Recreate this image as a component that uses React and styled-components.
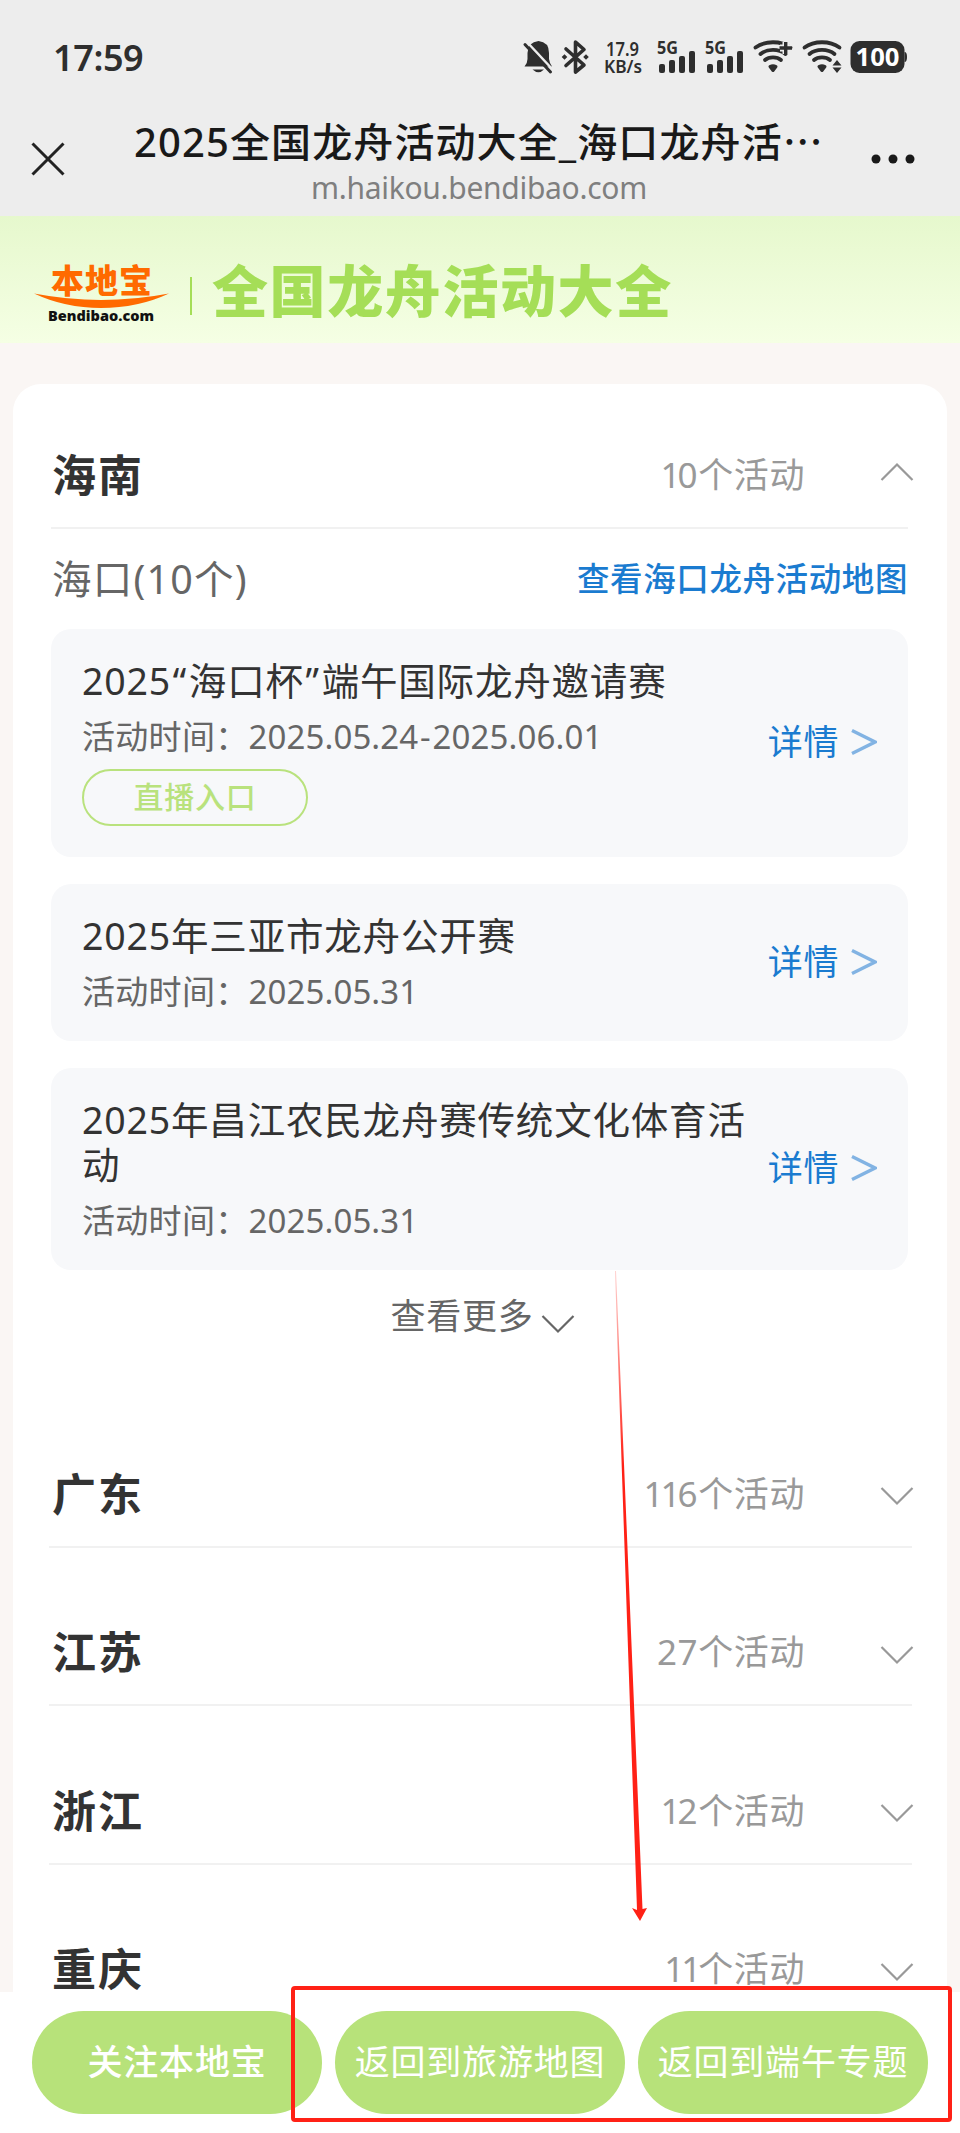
import React, { useState } from "react";
import styled, { createGlobalStyle } from "styled-components";

const provinces = [
  { name: "广东", count: 116 },
  { name: "江苏", count: 27 },
  { name: "浙江", count: 12 },
  { name: "重庆", count: 11 },
];

const events = [
  {
    title: "2025“海口杯”端午国际龙舟邀请赛",
    date: "2025.05.24-2025.06.01",
    live: true,
  },
  { title: "2025年三亚市龙舟公开赛", date: "2025.05.31" },
  { title: "2025年昌江农民龙舟赛传统文化体育活动", date: "2025.05.31" },
];

const GlobalStyle = createGlobalStyle`
  * {
    box-sizing: border-box;
  }

  body {
    margin: 0;
    background: #faf6f4;
    font-family: "Noto Sans", "Noto Sans CJK SC", sans-serif;
  }
`;

const Signal = ({ x }) => (
  <g fill="#2e2e2e">
    <text x={x - 2} y="34" fontSize="17" fontWeight="700" textLength="21" lengthAdjust="spacingAndGlyphs">
      5G
    </text>
    <rect x={x} y="44" width="6" height="9" rx="2" />
    <rect x={x + 10} y="40" width="6" height="13" rx="2" />
    <rect x={x + 20} y="36" width="6" height="17" rx="2" />
    <rect x={x + 30} y="31" width="6" height="22" rx="2" />
  </g>
);

const Wifi = ({ x }) => (
  <g transform={`translate(${x} 0)`} fill="none" stroke="#2e2e2e" strokeWidth="3.8" strokeLinecap="round">
    <path d="M-17.5 27.5 C-8 20.5 8 20.5 17.5 27.5" />
    <path d="M-12.5 34 C-6 28.5 6 28.5 12.5 34" />
    <path d="M-8 40 C-4 36.5 4 36.5 8 40" />
    <path d="M-3 46.5 Q0 45 3 46.5 L0 50.5Z" fill="#2e2e2e" strokeWidth="3" strokeLinejoin="round" />
  </g>
);

const StatusIcons = () => (
  <svg width="386" height="66" viewBox="0 0 386 66">
    {/* muted bell */}
    <path d="M3.5 46.5 Q6.5 43 6.5 39 V33 Q7 22 17.5 21 Q28 22 28 33 V39 Q28.5 43 31 46.5 Z" fill="#2e2e2e" />
    <path d="M11.5 49.5 H23 Q17.5 55 11.5 49.5Z" fill="#2e2e2e" />
    <path d="M6 22 L33 51" stroke="#ededed" strokeWidth="2.5" />
    <path d="M4 24.5 L29.5 52" stroke="#2e2e2e" strokeWidth="3" strokeLinecap="round" />
    {/* bluetooth */}
    <path
      d="M45 29 L63 45 L54.5 52 V22 L63 29.5 L45 45.5"
      fill="none"
      stroke="#2e2e2e"
      strokeWidth="3.6"
      strokeLinejoin="round"
      strokeLinecap="round"
    />
    <path d="M43.5 34.2 l2.8 2.8 l-2.8 2.8 l-2.8 -2.8Z M65 34.2 l2.8 2.8 l-2.8 2.8 l-2.8 -2.8Z" fill="#2e2e2e" />
    <g fill="#2e2e2e" fontWeight="600">
      <text x="85" y="35.5" fontSize="20" textLength="33" lengthAdjust="spacingAndGlyphs">
        17.9
      </text>
      <text x="83" y="53" fontSize="17.5" textLength="38" lengthAdjust="spacingAndGlyphs">
        KB/s
      </text>
    </g>
    <Signal x={138} />
    <Signal x={186} />
    <Wifi x={252} />
    <path d="M259 28 H271 M265 22 V34" stroke="#ededed" strokeWidth="7" />
    <path d="M258.5 28 H271 M264.7 22 V34" stroke="#2e2e2e" strokeWidth="3.4" />
    <Wifi x={301} />
    <path d="M316 40 L320.5 45.5 H311.5Z M311.5 47.5 H320.5 L316 53Z" fill="#2e2e2e" />
    <rect x="329.5" y="21" width="54" height="32" rx="9" fill="#2e2e2e" />
    <path d="M383.5 32 Q386 32 386 37 Q386 42 383.5 42Z" fill="#2e2e2e" />
    <text x="334.5" y="46" fontSize="25" fontWeight="700" fill="#fff" textLength="44" lengthAdjust="spacingAndGlyphs">
      100
    </text>
  </svg>
);

const Logo = () => (
  <svg width="136" height="76" viewBox="0 0 136 76">
    <text
      x="17"
      y="41.5"
      fontFamily="Noto Sans CJK SC, sans-serif"
      fontSize="33"
      fontWeight="900"
      fill="#ff6a00"
      textLength="101"
    >
      本地宝
    </text>
    <path d="M0 42.5 Q34 49 67 49 Q101 49 135 42.5 Q104 57 67 57 Q31 57 0 42.5Z" fill="#ff6a00" />
    <text x="14" y="70" fontSize="14.5" fontWeight="900" fill="#111" textLength="106" lengthAdjust="spacingAndGlyphs">
      Bendibao.com
    </text>
  </svg>
);

const Chevron = ({ up, color = "#999" }) => (
  <svg width="34" height="20" viewBox="0 0 34 20">
    <path d={up ? "M1.5 18 L17 2.5 L32.5 18" : "M1.5 2 L17 17.5 L32.5 2"} fill="none" stroke={color} strokeWidth="2.2" />
  </svg>
);

// the figure 1 sits tighter than the others, dashes and quotes looser
const Spaced = ({ children }) =>
  String(children)
    .split("")
    .map((char, i) => {
      if (char === "1") return <One key={i}>1</One>;
      if ("-“”".includes(char)) return <Loose key={i}>{char}</Loose>;
      return char;
    });

const Province = ({ name, count, open, onClick }) => (
  <ProvinceRow $open={open} onClick={onClick}>
    <ProvinceName>{name}</ProvinceName>
    <Count>
      <Spaced>{count}</Spaced>个活动
    </Count>
    <Chevron up={open} />
  </ProvinceRow>
);

const EventCard = ({ title, date, live }) => (
  <Card>
    <CardBody>
      <CardTitle>
        <Spaced>{title}</Spaced>
      </CardTitle>
      <CardDate>
        活动时间：
        <DateText>
          <Spaced>{date}</Spaced>
        </DateText>
      </CardDate>
      {live && <LiveButton>直播入口</LiveButton>}
    </CardBody>
    <Detail>
      详情
      <svg width="26" height="28" viewBox="0 0 26 28">
        <path d="M1 2.5 L24 14 L1 25.5" fill="none" stroke="#82b3e3" strokeWidth="3.4" />
      </svg>
    </Detail>
  </Card>
);

const App = () => {
  const [open, setOpen] = useState(true);

  return (
    <Page>
      <GlobalStyle />
      <StatusBar>
        <Clock>17:59</Clock>
        <StatusIcons />
      </StatusBar>

      <NavBar>
        <svg width="34" height="34" viewBox="0 0 34 34">
          <path d="M1.5 1.5 L32.5 32.5 M32.5 1.5 L1.5 32.5" stroke="#222" strokeWidth="3" />
        </svg>
        <NavText>
          <NavTitle>2025全国龙舟活动大全_海口龙舟活<Dots>⋯</Dots></NavTitle>
          <NavUrl>m.haikou.bendibao.com</NavUrl>
        </NavText>
        <svg width="44" height="10" viewBox="0 0 44 10">
          <circle cx="5" cy="5" r="4.5" fill="#191919" />
          <circle cx="22" cy="5" r="4.5" fill="#191919" />
          <circle cx="39" cy="5" r="4.5" fill="#191919" />
        </svg>
      </NavBar>

      <Banner>
        <Logo />
        <Divider />
        <BannerTitle>全国龙舟活动大全</BannerTitle>
      </Banner>

      <Panel>
        <Province name="海南" count={10} open={open} onClick={() => setOpen(!open)} />
        {open && (
          <City>
            <CityHead>
              <CityName>海口(10个)</CityName>
              <MapLink>查看海口龙舟活动地图</MapLink>
            </CityHead>
            <CardList>
              {events.map((item) => (
                <EventCard key={item.title} {...item} />
              ))}
            </CardList>
            <More>
              <span>查看更多</span>
              <Chevron color="#666" />
            </More>
          </City>
        )}
        {provinces.map((item) => (
          <Province key={item.name} {...item} />
        ))}
      </Panel>

      <BottomBar>
        <BottomButton $bold>关注本地宝</BottomButton>
        <BottomButton>返回到旅游地图</BottomButton>
        <BottomButton>返回到端午专题</BottomButton>
      </BottomBar>

      <Highlight />
      <Arrow width="40" height="656" viewBox="0 0 40 656">
        <defs>
          <linearGradient id="fade" x1="0" y1="0" x2="0" y2="1">
            <stop offset="0" stopColor="#ff2116" stopOpacity="0.2" />
            <stop offset="0.3" stopColor="#ff2116" />
          </linearGradient>
        </defs>
        <path d="M5 0 L6 0 L32.5 638 L37 637 L30 650 L22 637 L27 639Z" fill="url(#fade)" />
      </Arrow>
    </Page>
  );
};

const Page = styled.div`
  position: relative;
  width: 960px;
  height: 2133px;
  overflow: hidden;
  display: flex;
  flex-direction: column;
`;

const StatusBar = styled.div`
  height: 108px;
  flex-shrink: 0;
  padding: 20px 53px 0 53px;
  display: flex;
  justify-content: space-between;
  align-items: flex-start;
  background: #ededed;
`;

const Clock = styled.div`
  font-size: 36px;
  line-height: 75px;
  font-weight: 600;
  letter-spacing: -0.4px;
  color: #2e2e2e;
`;

const NavBar = styled.div`
  height: 108px;
  flex-shrink: 0;
  padding: 0 45px 6px 31px;
  display: flex;
  align-items: center;
  background: #ededed;
`;

const NavText = styled.div`
  flex: 1;
  padding-left: 22px;
  display: flex;
  flex-direction: column;
  align-items: center;
`;

const NavTitle = styled.div`
  font-size: 40px;
  line-height: 56px;
  font-weight: 500;
  letter-spacing: 1.1px;
  color: #191919;
  white-space: nowrap;
`;

const Dots = styled.span`
  font-family: "Noto Sans CJK SC", sans-serif;
`;

const NavUrl = styled.div`
  font-size: 30px;
  line-height: 36px;
  letter-spacing: -0.3px;
  color: #7f7f7f;
`;

const Banner = styled.div`
  height: 127px;
  flex-shrink: 0;
  padding: 18px 34px 0;
  display: flex;
  align-items: center;
  background: linear-gradient(#e6f8cd, #f5ffe4);
`;

const Divider = styled.div`
  width: 2px;
  height: 38px;
  margin: 14px 20px 0 20px;
  background: #a5de57;
`;

const BannerTitle = styled.div`
  padding-top: 3px;
  font-size: 56px;
  line-height: 70px;
  font-weight: 800;
  letter-spacing: 1.6px;
  color: #a5de57;
`;

const Panel = styled.div`
  margin: 41px 13px 0;
  padding: 0 25px 0 38px;
  border-radius: 28px 28px 0 0;
  background: #fff;
`;

const ProvinceRow = styled.div`
  height: ${(props) => (props.$open ? "145px" : "158.6px")};
  padding: ${(props) => (props.$open ? "38px 0 0 1px" : "52px 4px 0 3px")};
  margin: ${(props) => (props.$open ? "0 14px 0 0" : "0 10px 0 -2px")};
  display: flex;
  align-items: center;
  border-bottom: 2px solid #f1f1f1;

  svg {
    margin: ${(props) => (props.$open ? "-5px -6px 0 75px" : "5px -6px 0 75px")};
    flex-shrink: 0;
  }
`;

const ProvinceName = styled.div`
  flex: 1;
  font-size: 44px;
  line-height: 60px;
  font-weight: 700;
  letter-spacing: 2px;
  color: #333;
`;

const Count = styled.div`
  font-size: 35px;
  line-height: 50px;
  letter-spacing: 0.6px;
  color: #999;
`;

const One = styled.span`
  letter-spacing: -3px;
`;

const Loose = styled.span`
  margin: 0 1.8px;
`;

const City = styled.div`
  height: 860.3px;
  margin-right: 14px;
`;

const CityHead = styled.div`
  height: 99.5px;
  padding: 0 0 4px 1px;
  display: flex;
  align-items: center;
  justify-content: space-between;
`;

const CityName = styled.div`
  font-size: 39.5px;
  letter-spacing: 1.2px;
  color: #666;
`;

const MapLink = styled.div`
  font-size: 32.5px;
  font-weight: 500;
  letter-spacing: 0.6px;
  color: #1a7bd0;
`;

const CardList = styled.div`
  display: flex;
  flex-direction: column;
  gap: 27px;
`;

const Card = styled.div`
  padding: 29px 31px 27px 31px;
  display: flex;
  align-items: center;
  justify-content: space-between;
  border-radius: 20px;
  background: #f7f8fa;
`;

const CardBody = styled.div`
  width: 670px;
`;

const CardTitle = styled.div`
  font-size: 37.5px;
  line-height: 45px;
  letter-spacing: 0.8px;
  color: #333;
`;

const CardDate = styled.div`
  margin-top: 12px;
  font-size: 33px;
  line-height: 44px;
  letter-spacing: 0.3px;
  color: #666;
`;

const DateText = styled.span`
  letter-spacing: 0.1px;
`;

const LiveButton = styled.div`
  width: 226px;
  height: 57px;
  margin: 10px 0 4px;
  padding-bottom: 4px;
  display: flex;
  align-items: center;
  justify-content: center;
  border: 2px solid #b9e27d;
  border-radius: 29px;
  font-size: 30px;
  font-weight: 500;
  letter-spacing: 0.8px;
  color: #b9e27d;
`;

const Detail = styled.div`
  padding-bottom: 3px;
  display: flex;
  align-items: center;
  gap: 12px;
  font-size: 35px;
  line-height: 50px;
  letter-spacing: 0.6px;
  color: #1a7bd0;
`;

const More = styled.div`
  height: 94px;
  padding-left: 6px;
  display: flex;
  align-items: center;
  justify-content: center;
  gap: 7px;
  font-size: 35px;
  letter-spacing: 0.8px;
  color: #666;

  span {
    padding-bottom: 6px;
  }

  svg {
    margin-top: 15px;
  }
`;

const BottomBar = styled.div`
  position: absolute;
  left: 0;
  right: 0;
  bottom: 0;
  height: 141px;
  padding: 19px 32px;
  display: flex;
  gap: 13px;
  background: #fff;
`;

const BottomButton = styled.div`
  flex: 1;
  height: 103px;
  padding-bottom: 6px;
  display: flex;
  align-items: center;
  justify-content: center;
  border-radius: 52px;
  font-size: 35px;
  font-weight: ${(props) => (props.$bold ? 500 : 400)};
  letter-spacing: 0.8px;
  white-space: nowrap;
  color: #fff;
  background: #b7e27a;
`;

const Highlight = styled.div`
  position: absolute;
  left: 291px;
  top: 1986px;
  width: 661px;
  height: 136px;
  border: 4px solid #ff2116;
  border-radius: 4px;
`;

const Arrow = styled.svg`
  position: absolute;
  left: 610px;
  top: 1271px;
`;

export default App;
